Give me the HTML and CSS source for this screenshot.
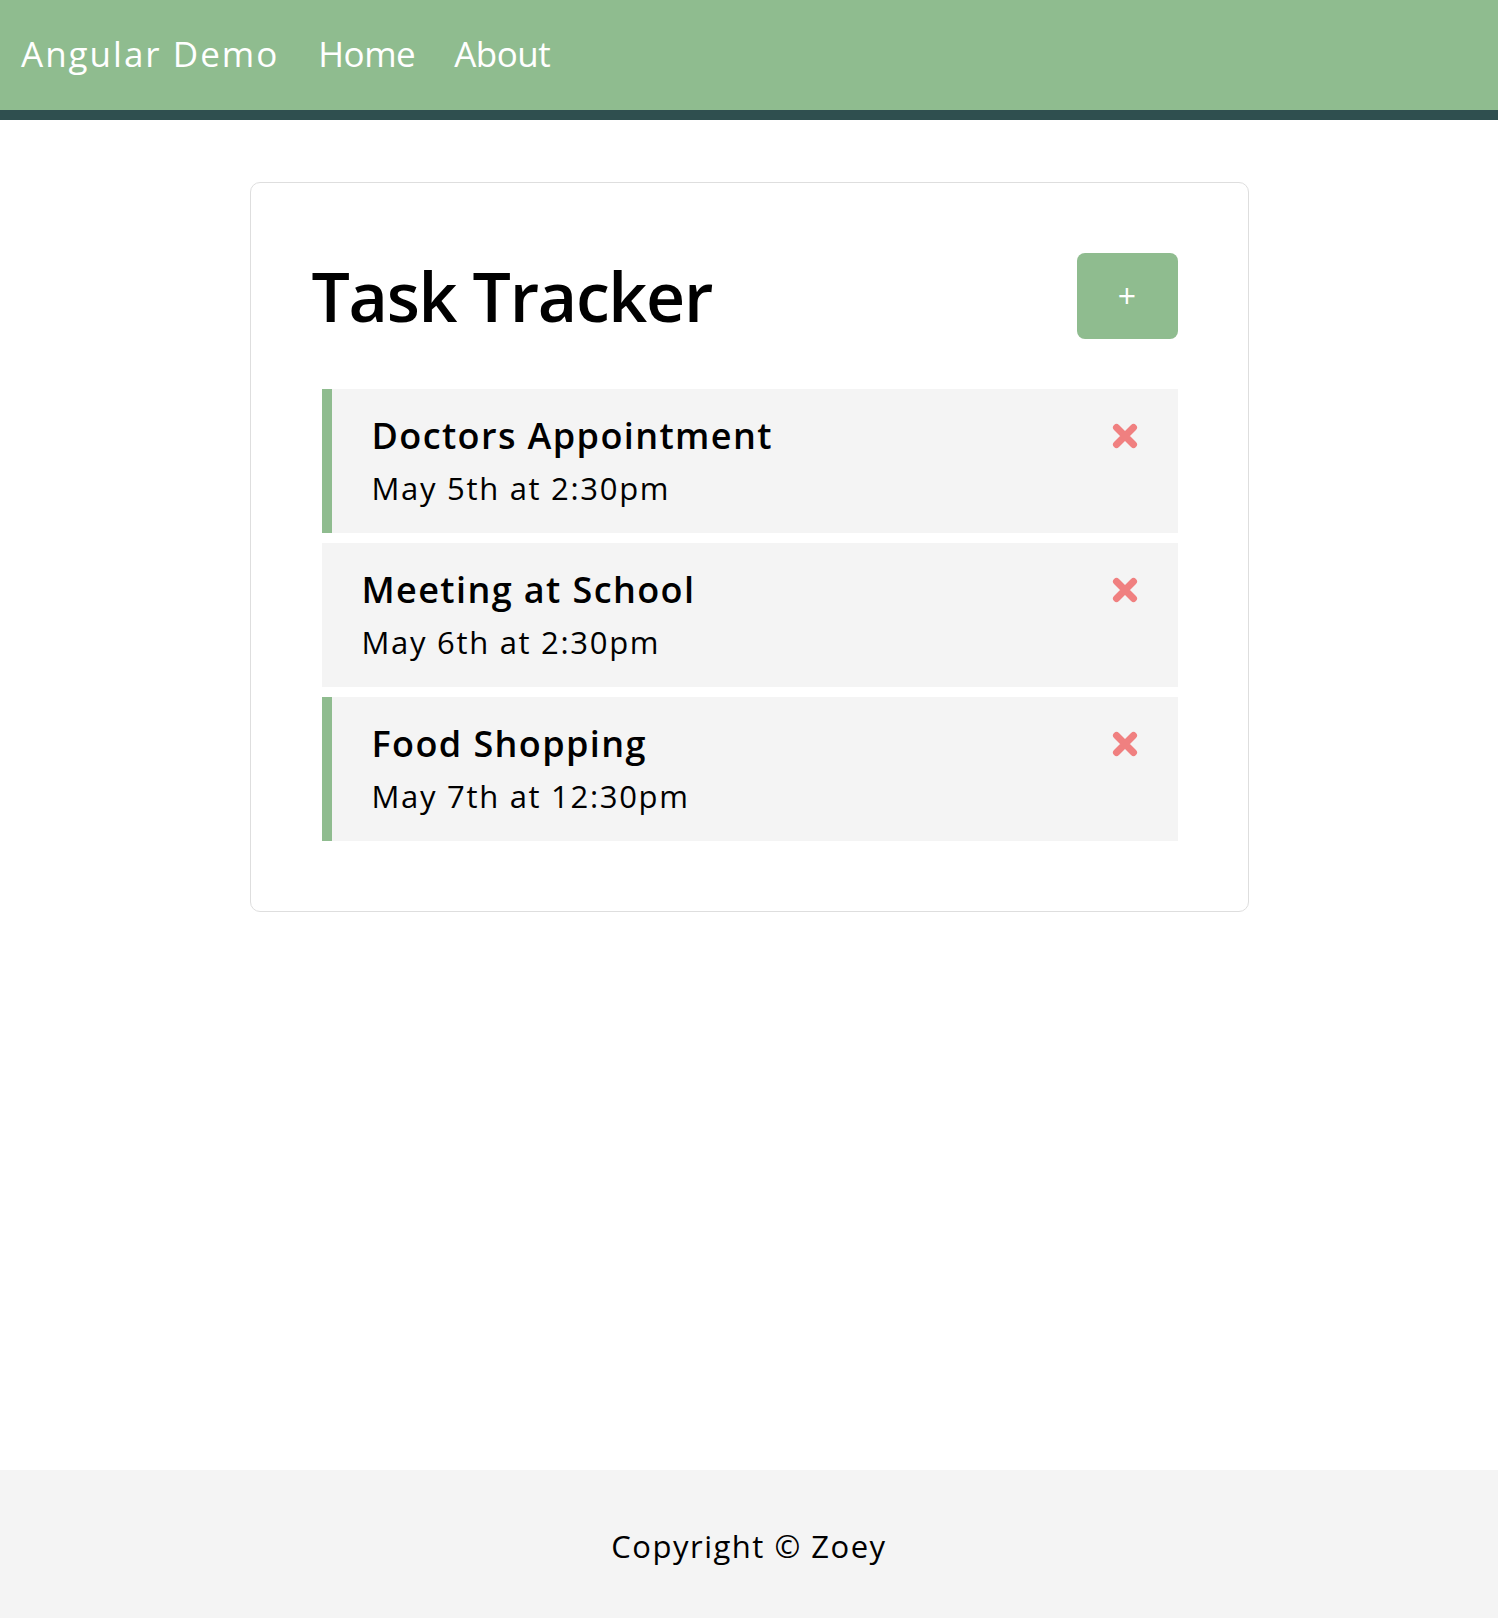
FILE: index.html
```html
<!DOCTYPE html>
<html lang="en">
<head>
<meta charset="utf-8">
<title>Angular Demo</title>
<link rel="stylesheet" href="styles.css">
</head>
<body>
<div class="page">
  <nav class="navbar">
    <a class="brand" href="#">Angular Demo</a>
    <a class="nav-link" href="#">Home</a>
    <a class="nav-link" href="#">About</a>
  </nav>
  <main class="main">
    <section class="card">
      <header class="card-header">
        <h1 class="title">Task Tracker</h1>
        <button class="add-btn" type="button">+</button>
      </header>
      <div class="tasks">
        <div class="task reminder">
          <div class="task-text">
            <h3 class="task-title">Doctors Appointment</h3>
            <p class="task-day">May 5th at 2:30pm</p>
          </div>
          <svg class="del" viewBox="0 0 26 26" aria-hidden="true"><path d="M4.5 4.5 L21.5 21.5 M21.5 4.5 L4.5 21.5"/></svg>
        </div>
        <div class="task">
          <div class="task-text">
            <h3 class="task-title">Meeting at School</h3>
            <p class="task-day">May 6th at 2:30pm</p>
          </div>
          <svg class="del" viewBox="0 0 26 26" aria-hidden="true"><path d="M4.5 4.5 L21.5 21.5 M21.5 4.5 L4.5 21.5"/></svg>
        </div>
        <div class="task reminder">
          <div class="task-text">
            <h3 class="task-title">Food Shopping</h3>
            <p class="task-day">May 7th at 12:30pm</p>
          </div>
          <svg class="del" viewBox="0 0 26 26" aria-hidden="true"><path d="M4.5 4.5 L21.5 21.5 M21.5 4.5 L4.5 21.5"/></svg>
        </div>
      </div>
    </section>
  </main>
  <footer class="footer">
    <p class="copy">Copyright &copy; Zoey</p>
  </footer>
</div>
</body>
</html>
```
FILE: styles.css
```css
* {
  box-sizing: border-box;
}

html, body {
  margin: 0;
  padding: 0;
}

body {
  font-family: "Open Sans", "Noto Sans", sans-serif;
  color: #000;
  background: #fff;
}

.page {
  min-height: 100vh;
  display: flex;
  flex-direction: column;
}

.navbar {
  height: 120px;
  background: #8fbc8f;
  border-bottom: 10px solid #2f4f4f;
  display: flex;
  align-items: center;
  padding: 0 0 3px 21px;
  gap: 39px;
}

.navbar a {
  color: #fff;
  text-decoration: none;
  font-size: 35px;
  line-height: 40px;
}

.navbar .brand {
  letter-spacing: 2px;
}

.navbar .nav-link {
  letter-spacing: -0.5px;
}

.main {
  flex: 1;
  padding-top: 62px;
}

.card {
  width: 999px;
  margin: 0 auto;
  border: 1px solid #dedede;
  border-radius: 10px;
  padding: 70px 70px 70px 71px;
}

.card-header {
  display: flex;
  align-items: center;
  justify-content: space-between;
  margin-left: -10px;
  margin-bottom: 50px;
}

.title {
  margin: 0;
  font-size: 68px;
  font-weight: 600;
  line-height: 86px;
  letter-spacing: -1.3px;
}

.add-btn {
  width: 101px;
  height: 86px;
  border: none;
  border-radius: 8px;
  background: #8fbc8f;
  color: #fff;
  font-family: inherit;
  font-size: 32px;
  line-height: 1;
  padding: 0;
}

.tasks {
  display: flex;
  flex-direction: column;
  gap: 10px;
}

.task {
  display: flex;
  align-items: flex-start;
  justify-content: space-between;
  height: 144px;
  background: #f4f4f4;
  padding: 25px 40px;
}

.task.reminder {
  border-left: 10px solid #8fbc8f;
}

.task-title {
  margin: 0;
  font-size: 36px;
  font-weight: 600;
  line-height: 44px;
  letter-spacing: 1.4px;
}

.task-day {
  margin: 10px 0 0;
  font-size: 31px;
  font-weight: 400;
  line-height: 40px;
  letter-spacing: 1.7px;
}

.del {
  width: 26px;
  height: 26px;
  margin-top: 9px;
  flex: none;
}

.del path {
  stroke: #f08080;
  stroke-width: 7;
  stroke-linecap: round;
  fill: none;
}

.footer {
  height: 148px;
  background: #f4f4f4;
  display: flex;
  align-items: center;
  justify-content: center;
}

.copy {
  margin: 0;
  font-size: 31px;
  line-height: 40px;
  padding-top: 4px;
  letter-spacing: 1.5px;
}
```
